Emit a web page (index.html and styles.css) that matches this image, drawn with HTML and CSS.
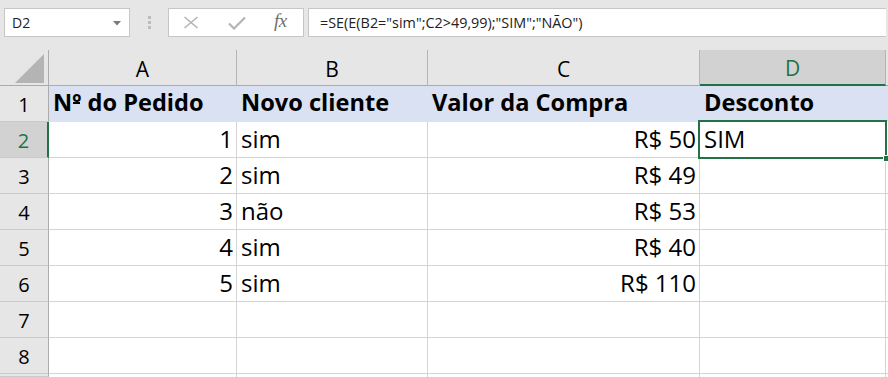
FILE: index.html
```html
<!DOCTYPE html>
<html lang="pt">
<head>
<meta charset="utf-8">
<title>Excel</title>
<link rel="stylesheet" href="styles.css">
</head>
<body>
<div class="toolbar">
  <div class="namebox">
    <span class="name">D2</span>
    <svg class="caret" width="8" height="5" viewBox="0 0 8 5"><path d="M0 0h8L4 4.5z" fill="#7a7a7a"/></svg>
  </div>
  <div class="grip"><i></i><i></i><i></i></div>
  <div class="fbtns">
    <svg class="ico-x" width="16" height="13" viewBox="0 0 16 13"><path d="M1.5 1l13 11M14.5 1l-13 11" stroke="#b4b4b4" stroke-width="1.6" fill="none"/></svg>
    <svg class="ico-ok" width="18" height="14" viewBox="0 0 18 14"><path d="M1 7.5l5 5L17 1.5" stroke="#b4b4b4" stroke-width="2.2" fill="none"/></svg>
    <span class="fx">fx</span>
  </div>
  <div class="formula">=SE(E(B2="sim";C2&gt;49,99);"SIM";"NÃO")</div>
</div>
<div class="sheet">
  <div class="hd corner"><svg width="29" height="29" viewBox="0 0 29 29"><path d="M29 0V29H0z" fill="#b4b4b4"/></svg></div>
  <div class="hd col">A</div>
  <div class="hd col">B</div>
  <div class="hd col">C</div>
  <div class="hd col sel">D</div>
  <div class="hd col"></div>

  <div class="rh">1</div>
  <div class="c r1 b"><span>N<span class="ord">º</span> do Pedido</span></div>
  <div class="c r1 b">Novo cliente</div>
  <div class="c r1 b">Valor da Compra</div>
  <div class="c r1 b">Desconto</div>
  <div class="c r1"></div>

  <div class="rh sel">2</div>
  <div class="c num">1</div>
  <div class="c">sim</div>
  <div class="c num">R$ 50</div>
  <div class="c active">SIM<span class="handle"></span></div>
  <div class="c"></div>

  <div class="rh">3</div>
  <div class="c num">2</div>
  <div class="c">sim</div>
  <div class="c num">R$ 49</div>
  <div class="c"></div>
  <div class="c"></div>

  <div class="rh">4</div>
  <div class="c num">3</div>
  <div class="c">não</div>
  <div class="c num">R$ 53</div>
  <div class="c"></div>
  <div class="c"></div>

  <div class="rh">5</div>
  <div class="c num">4</div>
  <div class="c">sim</div>
  <div class="c num">R$ 40</div>
  <div class="c"></div>
  <div class="c"></div>

  <div class="rh">6</div>
  <div class="c num">5</div>
  <div class="c">sim</div>
  <div class="c num">R$ 110</div>
  <div class="c"></div>
  <div class="c"></div>

  <div class="rh">7</div>
  <div class="c"></div>
  <div class="c"></div>
  <div class="c"></div>
  <div class="c"></div>
  <div class="c"></div>

  <div class="rh">8</div>
  <div class="c"></div>
  <div class="c"></div>
  <div class="c"></div>
  <div class="c"></div>
  <div class="c"></div>

  <div class="rh last"></div>
  <div class="c last"></div>
  <div class="c last"></div>
  <div class="c last"></div>
  <div class="c last"></div>
  <div class="c last"></div>
</div>
</body>
</html>
```

FILE: styles.css
```css
* { box-sizing: border-box; }
html, body { margin: 0; padding: 0; }
body {
  width: 888px;
  height: 377px;
  overflow: hidden;
  background: #e6e6e6;
  font-family: "Open Sans", "Noto Sans", sans-serif;
  color: #000;
}
.toolbar {
  height: 50px;
  display: flex;
  align-items: flex-start;
  padding: 8px 2px 0 4px;
}
.namebox {
  width: 126px;
  height: 29px;
  background: #fff;
  border: 1px solid #c6c6c6;
  display: flex;
  align-items: center;
  justify-content: space-between;
  padding: 0 8px 0 7px;
  font-size: 14px;
  color: #222;
}
.caret { margin-top: 1px; }
.grip {
  width: 38px;
  height: 29px;
  display: flex;
  flex-direction: column;
  align-items: center;
  justify-content: center;
  gap: 2px;
}
.grip i {
  display: block;
  width: 3px;
  height: 3px;
  background: #bcbcbc;
}
.fbtns {
  width: 136px;
  height: 29px;
  background: #fff;
  border: 1px solid #c6c6c6;
  display: flex;
  align-items: center;
  padding: 0 0 0 14px;
}
.ico-x { margin-right: 29px; }
.ico-ok { margin-right: 28px; margin-top: 1px; }
.fx {
  font-family: "Liberation Serif", "DejaVu Serif", serif;
  font-style: italic;
  font-size: 19px;
  color: #6f6f6f;
  margin-top: -3px;
  letter-spacing: -0.5px;
}
.formula {
  margin-left: 4px;
  flex: 1;
  height: 29px;
  background: #fff;
  border: 1px solid #c6c6c6;
  border-right: none;
  display: flex;
  align-items: center;
  padding-left: 11px;
  font-size: 14.4px;
  color: #222;
}

.sheet {
  display: grid;
  grid-template-columns: 49px 188px 191px 272px 186px 1fr;
  grid-template-rows: 36px;
  grid-auto-rows: 36px;
  background: #fff;
}
.hd {
  background: #e6e6e6;
  border-bottom: 1px solid #ababab;
  border-right: 1px solid #b4b4b4;
  display: flex;
  align-items: center;
  justify-content: center;
  font-size: 21px;
  padding-top: 2px;
  color: #000;
}
.hd.corner {
  justify-content: flex-end;
  align-items: flex-end;
  padding: 0 4px 2px 0;
  border-right: 1px solid #ababab;
}
.hd.sel {
  background: #d2d2d2;
  color: #217346;
  border-bottom: 2px solid #217346;
}
.rh {
  background: #e6e6e6;
  border-right: 1px solid #ababab;
  border-bottom: 1px solid #cacaca;
  display: flex;
  align-items: center;
  justify-content: center;
  font-size: 20px;
  padding-top: 1px;
}
.rh.sel {
  background: #d2d2d2;
  color: #217346;
  border-right: 2px solid #217346;
}
.c {
  border-right: 1px solid #d4d4d4;
  border-bottom: 1px solid #d4d4d4;
  display: flex;
  align-items: flex-end;
  padding: 0 3px 6px 4px;
  font-size: 24px;
  line-height: 1;
  white-space: nowrap;
}
.last { height: 3px; }
.c.num { justify-content: flex-end; }
.c.b { font-weight: 700; font-size: 23.6px; }
.ord { position: relative; }
.ord::after {
  content: "";
  position: absolute;
  left: 1px;
  right: 1px;
  top: 16px;
  height: 2px;
  background: #000;
}
.c.r1 {
  background: #d9e1f2;
  border-color: #d9e1f2;
}
.c.active { position: relative; }
.c.active::after {
  content: "";
  position: absolute;
  left: -2px;
  top: -2px;
  right: -2px;
  bottom: -2px;
  border: 2px solid #217346;
}
.handle {
  position: absolute;
  right: -5px;
  bottom: -5px;
  width: 7px;
  height: 7px;
  background: #217346;
  border: 1px solid #fff;
  z-index: 2;
}
```
